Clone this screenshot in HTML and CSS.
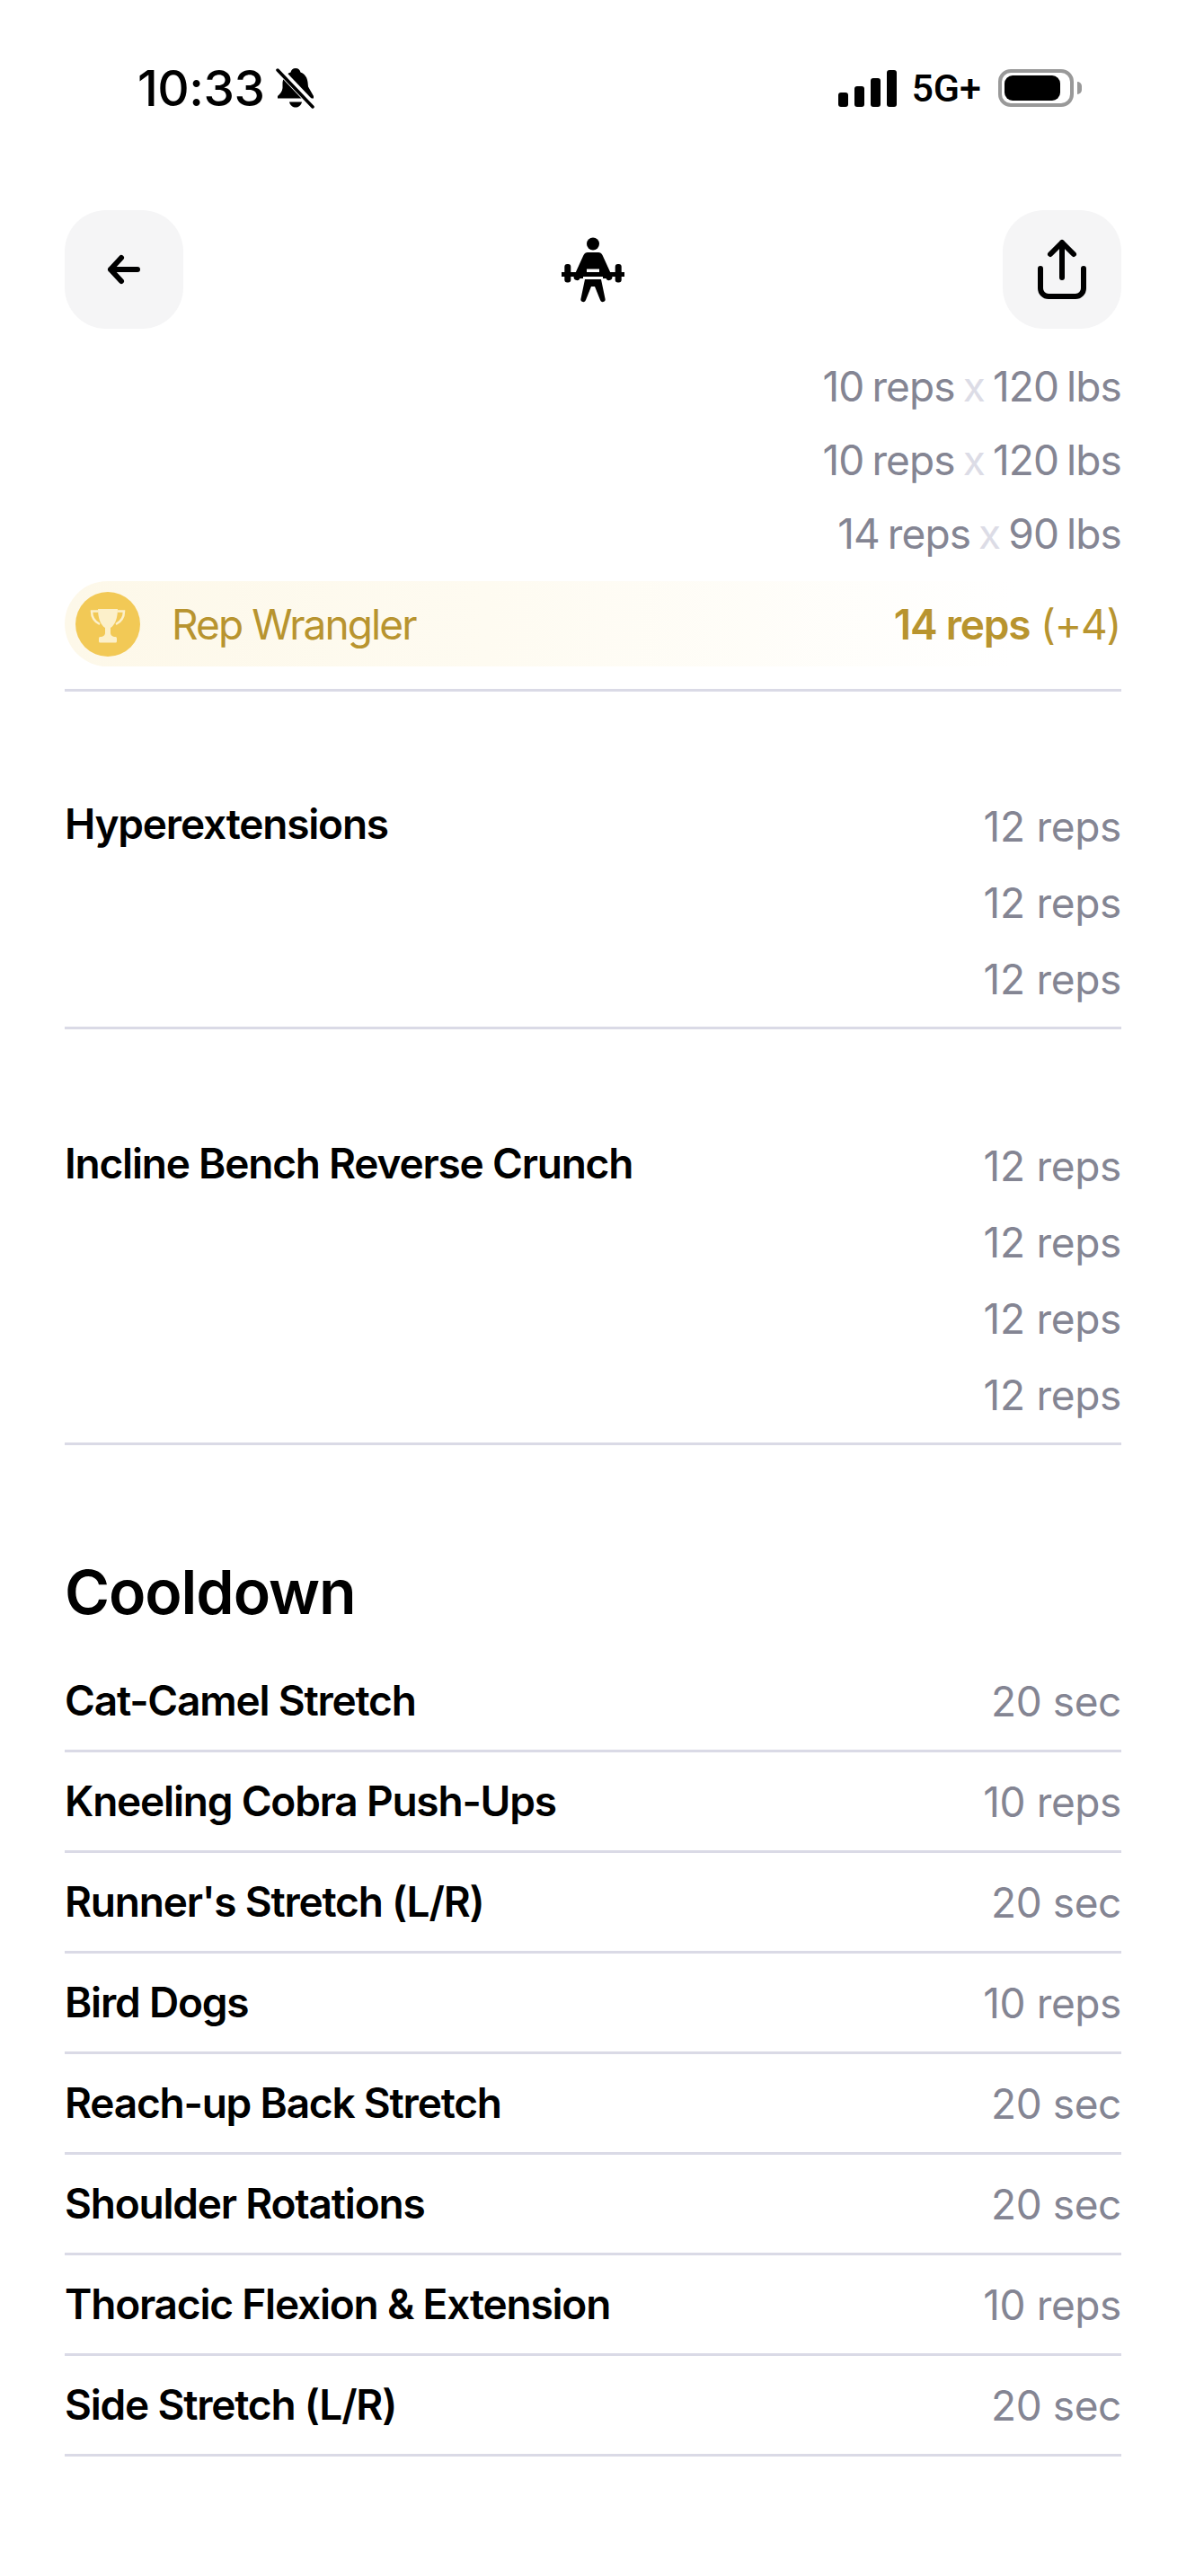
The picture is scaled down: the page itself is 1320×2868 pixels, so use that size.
FILE: index.html
```html
<!DOCTYPE html>
<html lang="en">
<head>
    <meta charset="UTF-8">
    <meta name="viewport" content="width=device-width, initial-scale=1.0">
    <title>Workout</title>
    <link rel="stylesheet" href="styles.css">
</head>
<body>
    <div class="status">
        <div class="status-left">
            <span class="time">10:33</span>
            <svg class="bell" width="44" height="46" viewBox="0 0 44 46">
                <path d="M22 1c3 0 5 2 5.500 4.500 5 2 7.500 6 8 11l.5 5 6 10.500v2.500H2v-2.500c3-2.500 5-5 5.500-9V17c.5-5 3.500-9.500 9-11.500C17 3 19 1 22 1z" fill="#000"/>
                <path d="M15 38.500h14c-1 4-4 6-7 6s-6-2-7-6z" fill="#000"/>
                <path d="M3 2l39 41" stroke="#fff" stroke-width="8"/>
                <path d="M2 3l39 41" stroke="#000" stroke-width="3.500" stroke-linecap="round"/>
            </svg>
        </div>
        <div class="status-right">
            <div class="signal">
                <span class="bar bar1"></span>
                <span class="bar bar2"></span>
                <span class="bar bar3"></span>
                <span class="bar bar4"></span>
            </div>
            <span class="network">5G+</span>
            <div class="battery"><div class="battery-level"></div></div>
            <div class="battery-nub"></div>
        </div>
    </div>

    <nav class="nav">
        <button class="nav-btn">
            <svg width="40" height="40" viewBox="0 0 40 40" fill="none" stroke="#000" stroke-width="6" stroke-linecap="round" stroke-linejoin="round">
                <path d="M5 20h30M17 7L5 20l12 13"/>
            </svg>
        </button>
        <svg class="lifter" width="70" height="73" viewBox="0 0 70 73">
            <circle cx="35" cy="7.500" r="7"/>
            <path d="M29 17h12c2 0 3.500 1 4.500 3L56 43a3.500 3.500 0 0 1-6.500 3H20.500a3.500 3.500 0 0 1-6.500-3L24.500 20c1-2 2.500-3 4.500-3z"/>
            <rect x="28" y="35.500" width="14" height="3.500" fill="#fff"/>
            <rect x="24" y="44" width="22" height="3" fill="#fff"/>
            <rect x="0" y="39" width="70" height="5"/>
            <rect x="3.300" y="30" width="7" height="20.500" rx="3"/>
            <rect x="59.700" y="30" width="7" height="20.500" rx="3"/>
            <path d="M26 47h18l4.500 21.500a2.800 2.800 0 0 1-5.500 1.500L37 55h-4l-6 15a2.800 2.800 0 0 1-5.500-1.500z"/>
        </svg>
        <button class="nav-btn">
            <svg width="60" height="70" viewBox="0 0 60 70" fill="none" stroke="#000" stroke-width="6" stroke-linecap="round" stroke-linejoin="round">
                <path d="M30 44V5M17 18L30 5l13 13"/>
                <path d="M6 34v22a9 9 0 0 0 9 9h30a9 9 0 0 0 9-9V34"/>
            </svg>
        </button>
    </nav>

    <main class="content">
        <section class="exercise first">
            <div class="sets wide">
                <div class="set">10 reps <span class="times">x</span> 120 lbs</div>
                <div class="set">10 reps <span class="times">x</span> 120 lbs</div>
                <div class="set">14 reps <span class="times">x</span> 90 lbs</div>
            </div>
            <div class="record">
                <div class="record-left">
                    <span class="trophy">
                        <svg width="72" height="72" viewBox="0 0 72 72">
                            <path d="M25 19h22c0 10-3 18-8 21v6c0 1.500 1 3 4 4H29c3-1 4-2.500 4-4v-6c-5-3-8-11-8-21z" fill="#fcf0ca"/>
                            <path d="M25 21.500h-7c0 7 3 11.500 9 14.500M47 21.500h7c0 7-3 11.500-9 14.500" fill="none" stroke="#fcf0ca" stroke-width="2.500"/>
                            <rect x="26" y="50" width="20" height="6.500" rx="1.500" fill="#fcf0ca"/>
                        </svg>
                    </span>
                    <span class="record-name">Rep Wrangler</span>
                </div>
                <div class="record-value"><b>14 reps</b> (+4)</div>
            </div>
        </section>

        <section class="exercise">
            <div class="exercise-row">
                <h3 class="exercise-name">Hyperextensions</h3>
                <div class="sets">
                    <div class="set">12 reps</div>
                    <div class="set">12 reps</div>
                    <div class="set">12 reps</div>
                </div>
            </div>
        </section>

        <section class="exercise">
            <div class="exercise-row">
                <h3 class="exercise-name">Incline Bench Reverse Crunch</h3>
                <div class="sets">
                    <div class="set">12 reps</div>
                    <div class="set">12 reps</div>
                    <div class="set">12 reps</div>
                    <div class="set">12 reps</div>
                </div>
            </div>
        </section>

        <h2 class="section-title">Cooldown</h2>
        <div class="list">
            <div class="list-row"><span class="list-name">Cat-Camel Stretch</span><span class="list-value">20 sec</span></div>
            <div class="list-row"><span class="list-name">Kneeling Cobra Push-Ups</span><span class="list-value">10 reps</span></div>
            <div class="list-row"><span class="list-name">Runner's Stretch (L/R)</span><span class="list-value">20 sec</span></div>
            <div class="list-row"><span class="list-name">Bird Dogs</span><span class="list-value">10 reps</span></div>
            <div class="list-row"><span class="list-name">Reach-up Back Stretch</span><span class="list-value">20 sec</span></div>
            <div class="list-row"><span class="list-name">Shoulder Rotations</span><span class="list-value">20 sec</span></div>
            <div class="list-row"><span class="list-name">Thoracic Flexion &amp; Extension</span><span class="list-value">10 reps</span></div>
            <div class="list-row"><span class="list-name">Side Stretch (L/R)</span><span class="list-value">20 sec</span></div>
        </div>
    </main>
</body>
</html>
```

FILE: styles.css
```css
* {
    box-sizing: border-box;
}
html, body {
    height: 2868px;
    overflow: hidden;
}
body {
    font-family: 'Inter', 'Liberation Sans', sans-serif;
    margin: 0;
    padding: 0;
    background-color: #ffffff;
    color: #000000;
}
.status {
    display: flex;
    justify-content: space-between;
    align-items: center;
    height: 44px;
    margin-top: 76px;
    padding: 0 116px 0 153px;
}
.status-left {
    display: flex;
    align-items: center;
    gap: 13px;
}
.time {
    font-size: 55px;
    font-weight: 500;
    line-height: 44px;
    letter-spacing: -0.5px;
}
.status-right {
    display: flex;
    align-items: center;
}
.signal {
    display: flex;
    align-items: flex-end;
    gap: 7px;
    height: 41px;
}
.bar {
    width: 11px;
    background: #000;
    border-radius: 3px;
}
.bar1 { height: 16px; }
.bar2 { height: 23px; }
.bar3 { height: 32px; }
.bar4 { height: 41px; }
.network {
    font-family: 'Roboto', sans-serif;
    font-size: 43px;
    font-weight: 500;
    margin: 0 19px 0 16px;
}
.battery {
    width: 84px;
    height: 42px;
    border: 4px solid #999999;
    border-radius: 14px;
    padding: 3px;
}
.battery-level {
    width: 62px;
    height: 28px;
    background: #000;
    border-radius: 9px;
}
.battery-nub {
    width: 5px;
    height: 14px;
    margin-left: 4px;
    background: #999999;
    border-radius: 0 7px 7px 0;
}
.nav {
    display: flex;
    justify-content: space-between;
    align-items: center;
    margin-top: 114px;
    padding: 0 72px;
}
.nav-btn {
    display: flex;
    align-items: center;
    justify-content: center;
    width: 132px;
    height: 132px;
    padding: 0;
    border: none;
    border-radius: 46px;
    background-color: #f5f5f6;
}
.content {
    padding: 0 72px;
}
.exercise {
    margin-top: 110px;
    border-bottom: 3px solid #dadae6;
}
.exercise.first {
    margin-top: 23px;
    padding-bottom: 25px;
}
.exercise.first + .exercise {
    margin-top: 108px;
}
.exercise-row {
    display: flex;
    justify-content: space-between;
    align-items: flex-start;
    padding-bottom: 10px;
}
.exercise-name {
    margin: 0;
    font-size: 46px;
    font-weight: 600;
    line-height: 78px;
    letter-spacing: -1.2px;
}
.sets {
    text-align: right;
    color: #848593;
    font-size: 46px;
    letter-spacing: -0.3px;
}
.sets.wide {
    letter-spacing: -0.9px;
    word-spacing: -3px;
}
.set {
    height: 85px;
    line-height: 85px;
}
.sets.wide .set {
    height: 82px;
    line-height: 82px;
}
.times {
    color: #dcdce6;
}
.record {
    display: flex;
    justify-content: space-between;
    align-items: center;
    height: 95px;
    margin-top: 12px;
    padding: 0 1px 0 12px;
    border-radius: 48px 0 0 48px;
    background: linear-gradient(90deg, #fdf8e9 0%, #fefbf1 40%, #ffffff 90%);
    color: #b8942f;
    font-size: 46px;
}
.record-left {
    display: flex;
    align-items: center;
    gap: 35px;
}
.record-name {
    letter-spacing: -1.9px;
}
.record-value {
    letter-spacing: -1.2px;
}
.record-value b {
    font-weight: 600;
}
.trophy {
    display: flex;
    width: 72px;
    height: 72px;
    border-radius: 50%;
    background-color: #f2c956;
}
.section-title {
    margin: 118px 0 0;
    font-size: 68px;
    font-weight: 600;
    line-height: 90px;
    letter-spacing: -1.1px;
}
.list {
    margin-top: 22px;
}
.list-row {
    display: flex;
    justify-content: space-between;
    align-items: center;
    height: 112px;
    padding-bottom: 2px;
    border-bottom: 3px solid #dadae6;
}
.list-name {
    font-size: 46px;
    font-weight: 600;
    letter-spacing: -1.2px;
}
.list-value {
    font-size: 46px;
    color: #848593;
    letter-spacing: -0.4px;
    padding-top: 3px;
}
```
